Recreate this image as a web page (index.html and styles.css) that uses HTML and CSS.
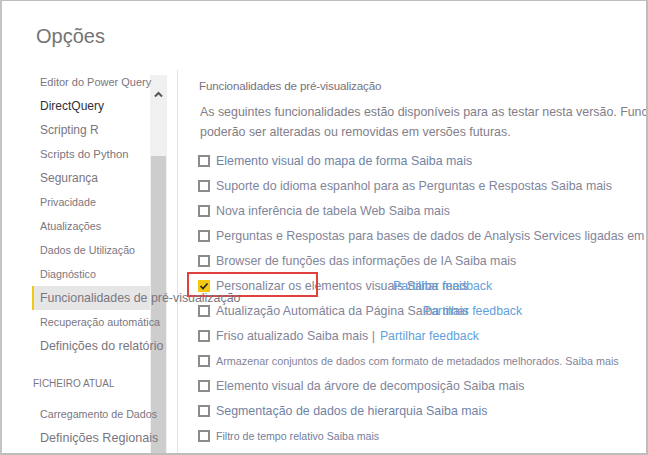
FILE: index.html
```html
<!DOCTYPE html>
<html lang="pt">
<head>
<meta charset="utf-8">
<title>Opções</title>
<link rel="stylesheet" href="styles.css">
</head>
<body>
<div class="window">
  <h1 class="title">Opções</h1>
  <div class="main">
    <div class="nav">
      <ul class="nav-list">
        <li class="item s11">Editor do Power Query</li>
        <li class="item s12 dark">DirectQuery</li>
        <li class="item s12">Scripting R</li>
        <li class="item s113">Scripts do Python</li>
        <li class="item s12">Segurança</li>
        <li class="item s107">Privacidade</li>
        <li class="item s108">Atualizações</li>
        <li class="item s107">Dados de Utilização</li>
        <li class="item s107">Diagnóstico</li>
        <li class="item s124 selected">Funcionalidades de pré-visualização</li>
        <li class="item s108">Recuperação automática</li>
        <li class="item s124">Definições do relatório</li>
        <li class="section">FICHEIRO ATUAL</li>
        <li class="item s107 first">Carregamento de Dados</li>
        <li class="item s126">Definições Regionais</li>
      </ul>
      <div class="scrollbar">
        <div class="sb-arrow">
          <svg width="9" height="7" viewBox="0 0 9 7"><path d="M1 5.5 L4.5 2 L8 5.5" fill="none" stroke="#555" stroke-width="2"/></svg>
        </div>
        <div class="sb-thumb"></div>
      </div>
    </div>
    <div class="divider"></div>
    <div class="content">
      <h2 class="heading">Funcionalidades de pré-visualização</h2>
      <p class="desc">As seguintes funcionalidades estão disponíveis para as testar nesta versão. Funcionalidades de pré-visualização</p>
      <p class="desc">poderão ser alteradas ou removidas em versões futuras.</p>
      <ul class="rows">
        <li class="row"><span class="box"></span><span class="label blue">Elemento visual do mapa de forma Saiba mais</span></li>
        <li class="row"><span class="box"></span><span class="label">Suporte do idioma espanhol para as Perguntas e Respostas Saiba mais</span></li>
        <li class="row"><span class="box"></span><span class="label">Nova inferência de tabela Web Saiba mais</span></li>
        <li class="row"><span class="box"></span><span class="label">Perguntas e Respostas para bases de dados de Analysis Services ligadas em direto Saiba mais</span></li>
        <li class="row"><span class="box"></span><span class="label">Browser de funções das informações de IA Saiba mais</span></li>
        <li class="row highlighted">
          <span class="box checked"><svg width="12" height="12" viewBox="0 0 12 12"><path d="M2.5 6 L5 8.5 L9.5 3.5" fill="none" stroke="#222" stroke-width="1.6"/></svg></span>
          <span class="stack"><span class="label">Personalizar os elementos visuais Saiba mais</span><span class="link fb1">Partilhar feedback</span></span>
          <span class="redbox"></span>
        </li>
        <li class="row"><span class="box"></span><span class="stack"><span class="label">Atualização Automática da Página Saiba mais</span><span class="link fb2">Partilhar feedback</span></span></li>
        <li class="row"><span class="box"></span><span class="label">Friso atualizado Saiba mais |</span><span class="link fb3">Partilhar feedback</span></li>
        <li class="row"><span class="box"></span><span class="label small">Armazenar conjuntos de dados com formato de metadados melhorados. Saiba mais</span></li>
        <li class="row"><span class="box"></span><span class="label">Elemento visual da árvore de decomposição Saiba mais</span></li>
        <li class="row"><span class="box"></span><span class="label blue">Segmentação de dados de hierarquia Saiba mais</span></li>
        <li class="row"><span class="box"></span><span class="label small2">Filtro de tempo relativo Saiba mais</span></li>
      </ul>
    </div>
  </div>
</div>
</body>
</html>
```
FILE: styles.css
```css
* { box-sizing: border-box; margin: 0; padding: 0; }
html, body { width: 648px; height: 455px; overflow: hidden; background: #fff; }
body { font-family: "Liberation Sans", Arial, sans-serif; }

.window {
  width: 648px; height: 455px;
  border-top: 1px solid #bdbdbd;
  border-left: 2px solid #c4c4c4;
  border-right: 2px solid #bdbdbd;
  border-bottom: 2px solid #bdbdbd;
  overflow: hidden;
  display: flex; flex-direction: column;
}
.title {
  font-weight: normal; font-size: 20px; line-height: 24px; height: 24px;
  color: #747474; padding-left: 34px; margin-top: 23px;
}
.main { display: flex; margin-top: 22px; flex: 1; min-height: 0; }

.nav { display: flex; flex: none; }
.nav-list { list-style: none; width: 148px; flex: none; position: relative; z-index: 1; }
.item {
  height: 24px; line-height: 24px; white-space: nowrap;
  color: #7a7680; margin-left: 30px; padding-left: 8px;
}
.item.dark { color: #2f2f38; }
.item.selected { background: #e6e6e6; border-left: 2px solid #f2c811; padding-left: 6px; }
.item.first { margin-top: 6px; }
.section {
  height: 24px; line-height: 24px; margin-top: 14px; margin-left: 31px;
  font-size: 10px; color: #7a7680; white-space: nowrap;
}
.s11 { font-size: 11px; }
.s12 { font-size: 12px; }
.s113 { font-size: 11.3px; }
.s107 { font-size: 10.7px; }
.s108 { font-size: 10.8px; }
.s124 { font-size: 12.4px; }
.s126 { font-size: 12.6px; }

.scrollbar {
  width: 17px; flex: none; margin-top: 5px; background: #f0f0f0;
  display: flex; flex-direction: column;
}
.sb-arrow { height: 81px; flex: none; display: flex; justify-content: center; padding-top: 16px; }
.sb-thumb { flex: 1; margin: 0 1px; background: #cdcdcd; }

.divider { width: 1px; flex: none; background: #e3e3e3; margin-left: 10px; }

.content { flex: 1; min-width: 0; overflow: hidden; padding: 6px 0 0 20px; white-space: nowrap; }
.heading {
  font-weight: normal; font-size: 11.6px; line-height: 20px; color: #76727c;
  padding-left: 1px; margin-bottom: 6px; letter-spacing: -0.15px;
}
.desc { font-size: 12.4px; line-height: 20px; color: #827e88; padding-left: 2px; }
.rows { list-style: none; margin-top: 6px; }
.row { height: 25px; display: flex; align-items: center; position: relative; }
.box {
  width: 12px; height: 12px; flex: none; border: 2px solid #8c8c8c;
  margin-right: 6px; background: #fff;
}
.box.checked { border: none; background: #f2c811; display: flex; }
.label { font-size: 12.4px; color: #82859a; }
.label.blue { color: #7183a5; }
.label.small { font-size: 10.8px; }
.label.small2 { font-size: 10.6px; color: #75809c; }
.link { font-size: 12.3px; color: #629fdc; }
.stack { display: grid; }
.stack > span { grid-area: 1 / 1; }
.fb1 { margin-left: 177px; }
.fb2 { margin-left: 207px; }
.fb3 { margin-left: 5px; }
.redbox {
  position: absolute; left: -11px; top: -1px; width: 131px; height: 25px;
  border: 2px solid #e0403e;
}
```
